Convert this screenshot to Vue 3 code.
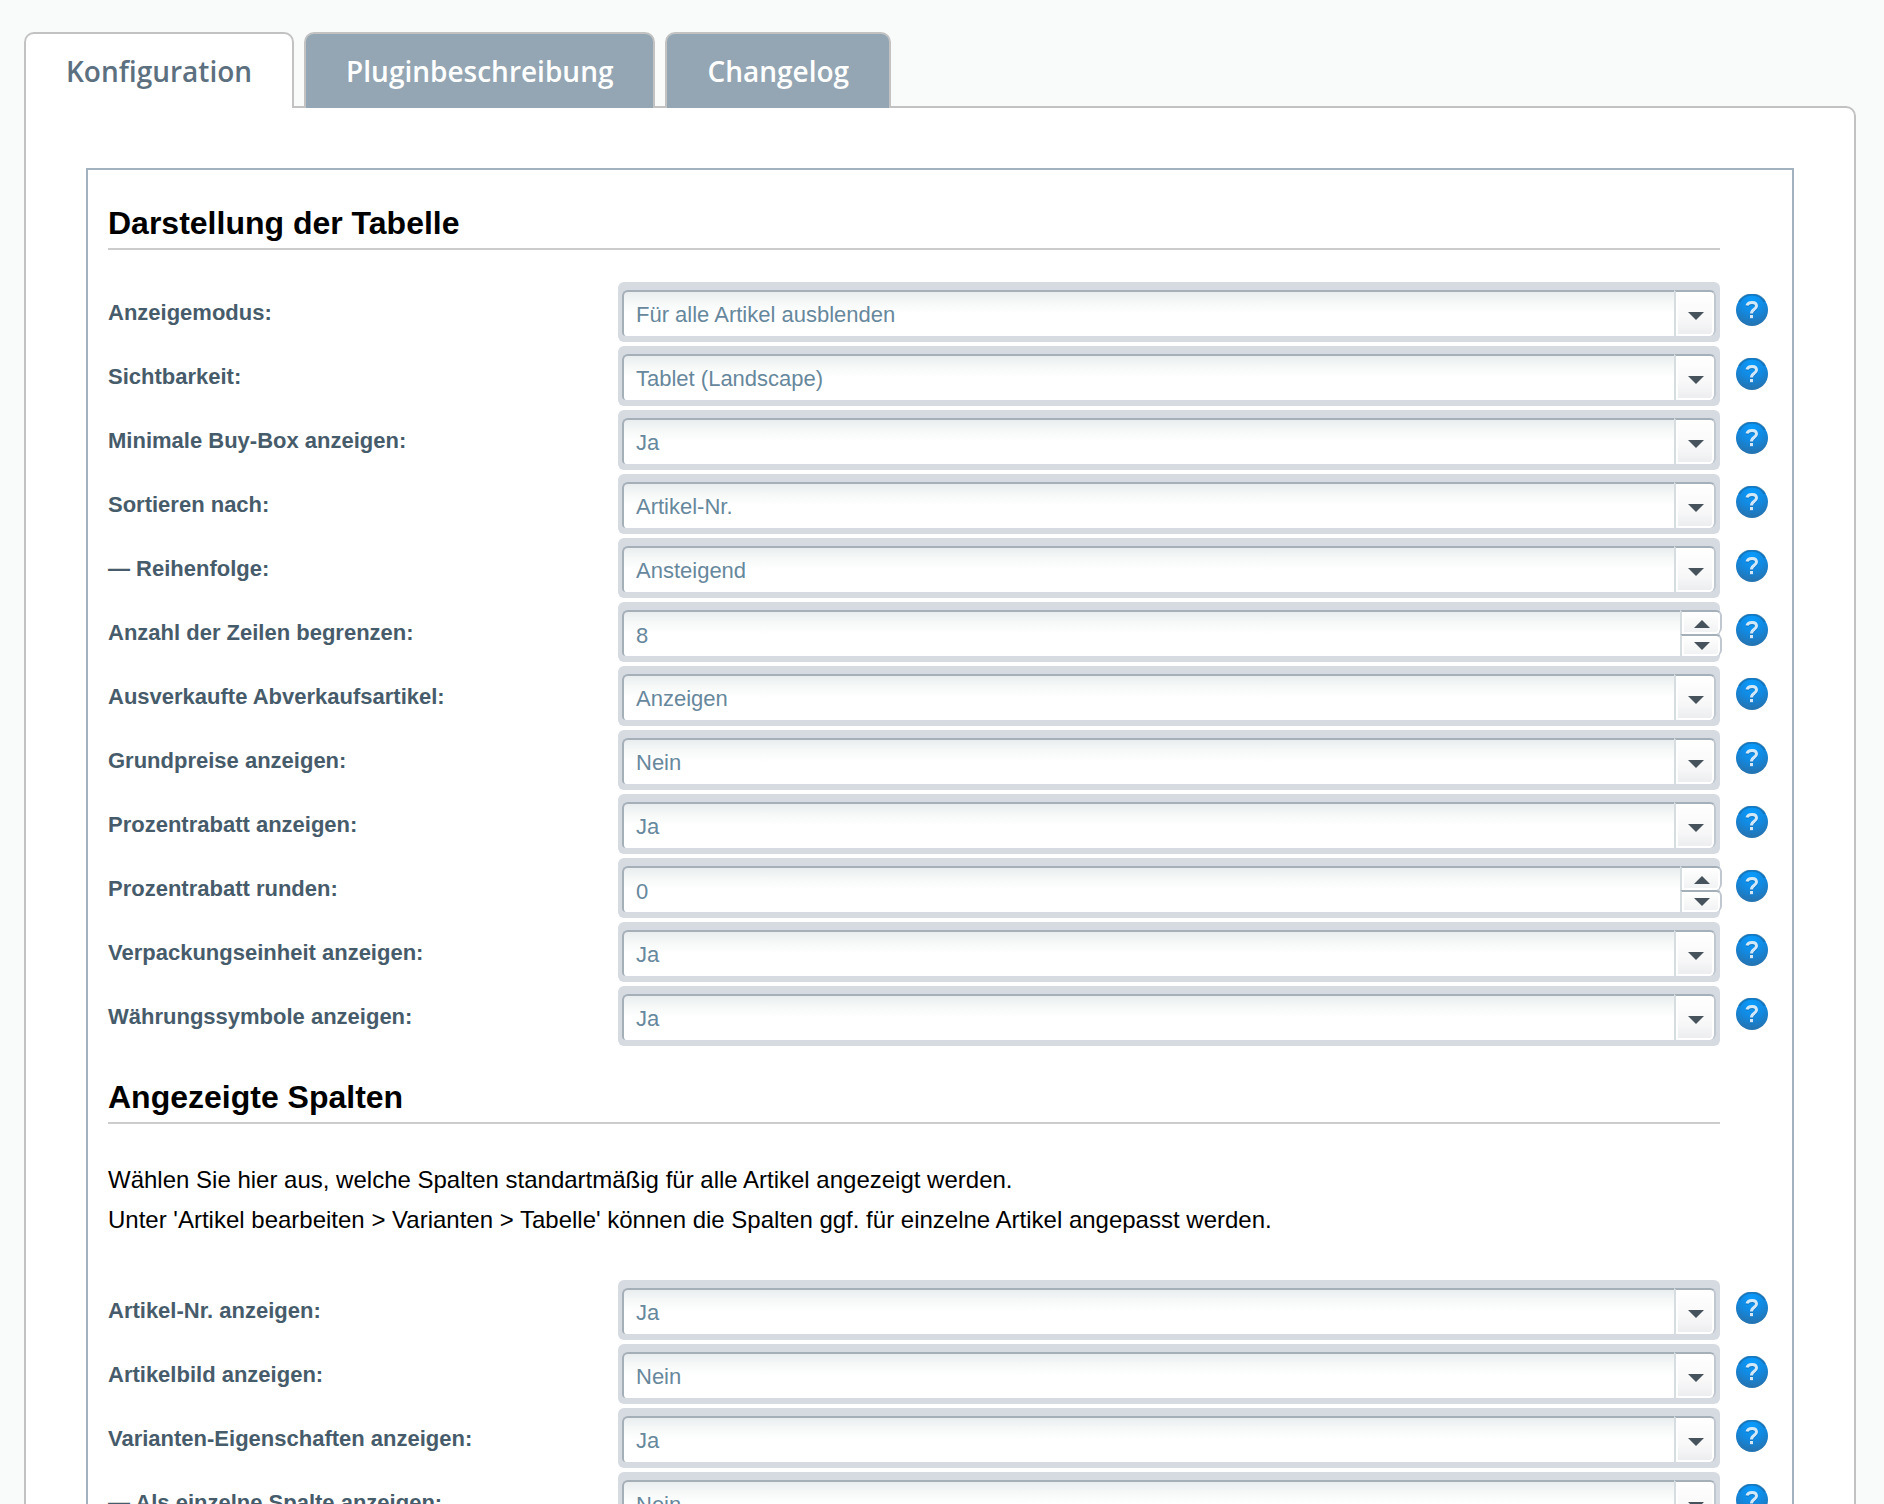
<script setup>
import { ref, reactive } from 'vue'

const tabs = ['Konfiguration', 'Pluginbeschreibung', 'Changelog']
const activeTab = ref(0)

const yesNo = ['Ja', 'Nein']

const sections = reactive([
  {
    id: 'table',
    title: 'Darstellung der Tabelle',
    intro: [],
    fields: [
      { label: 'Anzeigemodus:', value: 'Für alle Artikel ausblenden', options: ['Für alle Artikel ausblenden', 'Für alle Artikel anzeigen'] },
      { label: 'Sichtbarkeit:', value: 'Tablet (Landscape)', options: ['Tablet (Landscape)', 'Desktop'] },
      { label: 'Minimale Buy-Box anzeigen:', value: 'Ja', options: yesNo },
      { label: 'Sortieren nach:', value: 'Artikel-Nr.', options: ['Artikel-Nr.', 'Preis'] },
      { label: '— Reihenfolge:', value: 'Ansteigend', options: ['Ansteigend', 'Absteigend'] },
      { label: 'Anzahl der Zeilen begrenzen:', value: 8, number: true },
      { label: 'Ausverkaufte Abverkaufsartikel:', value: 'Anzeigen', options: ['Anzeigen', 'Ausblenden'] },
      { label: 'Grundpreise anzeigen:', value: 'Nein', options: yesNo },
      { label: 'Prozentrabatt anzeigen:', value: 'Ja', options: yesNo },
      { label: 'Prozentrabatt runden:', value: 0, number: true },
      { label: 'Verpackungseinheit anzeigen:', value: 'Ja', options: yesNo },
      { label: 'Währungssymbole anzeigen:', value: 'Ja', options: yesNo },
    ],
  },
  {
    id: 'columns',
    title: 'Angezeigte Spalten',
    intro: [
      'Wählen Sie hier aus, welche Spalten standartmäßig für alle Artikel angezeigt werden.',
      "Unter 'Artikel bearbeiten > Varianten > Tabelle' können die Spalten ggf. für einzelne Artikel angepasst werden.",
    ],
    fields: [
      { label: 'Artikel-Nr. anzeigen:', value: 'Ja', options: yesNo },
      { label: 'Artikelbild anzeigen:', value: 'Nein', options: yesNo },
      { label: 'Varianten-Eigenschaften anzeigen:', value: 'Ja', options: yesNo },
      { label: '— Als einzelne Spalte anzeigen:', value: 'Nein', options: yesNo },
    ],
  },
])

function step(field, delta) {
  field.value = Math.max(0, Number(field.value) + delta)
}
</script>

<template>
  <div class="page">
    <nav class="tabs">
      <button
        v-for="(tab, i) in tabs"
        :key="tab"
        type="button"
        class="tab"
        :class="{ active: i === activeTab }"
        @click="activeTab = i"
      >{{ tab }}</button>
    </nav>

    <main class="panel">
      <form class="box" @submit.prevent>
        <section v-for="s in sections" :key="s.id" class="section">
          <h2>{{ s.title }}</h2>
          <p v-if="s.intro.length">
            <template v-for="line in s.intro" :key="line">{{ line }}<br></template>
          </p>
          <div class="rows">
            <div v-for="(f, i) in s.fields" :key="f.label" class="row">
              <label :for="`${s.id}-${i}`">{{ f.label }}</label>

              <div v-if="f.number" class="field spinner">
                <input :id="`${s.id}-${i}`" v-model="f.value" type="text" inputmode="numeric">
                <span class="steps">
                  <button type="button" aria-label="Erhöhen" @click="step(f, 1)">
                    <svg viewBox="0 0 16 8"><path d="M8 0 16 8H0z" /></svg>
                  </button>
                  <button type="button" aria-label="Verringern" @click="step(f, -1)">
                    <svg viewBox="0 0 16 8"><path d="M0 0h16L8 8z" /></svg>
                  </button>
                </span>
              </div>

              <div v-else class="field combo">
                <select :id="`${s.id}-${i}`" v-model="f.value">
                  <option v-for="o in f.options" :key="o">{{ o }}</option>
                </select>
                <span class="trigger">
                  <svg viewBox="0 0 16 8"><path d="M0 0h16L8 8z" /></svg>
                </span>
              </div>

              <button type="button" class="help" aria-label="Hilfe">
                <svg viewBox="0 0 32 32">
                  <defs>
                    <radialGradient :id="`glow-${s.id}-${i}`" cx="0.5" cy="0.2" r="0.8">
                      <stop offset="0" stop-color="#089cff" />
                      <stop offset="0.5" stop-color="#1289e0" />
                      <stop offset="1" stop-color="#2672ae" />
                    </radialGradient>
                  </defs>
                  <circle cx="16" cy="16" r="16" :fill="`url(#glow-${s.id}-${i})`" />
                  <path class="rim" d="M3 8A15 15 0 0 1 29 8" />
                  <path class="mark shade" d="M11 12.500C12 8.500 20.500 8 20.500 13 20.500 16.500 15.500 16 15.500 20.500M15.500 22v3.200" />
                  <path class="mark" d="M11 11.500C12 7.500 20.500 7 20.500 12 20.500 15.500 15.500 15 15.500 19.500M15.500 21v3.200" />
                </svg>
              </button>
            </div>
          </div>
        </section>
      </form>
    </main>
  </div>
</template>

<style>
body {
  margin: 0;
  background: #f9fbfa;
}
</style>

<style scoped>
.page {
  box-sizing: border-box;
  height: 100vh;
  padding: 32px 28px 0 24px;
  overflow-y: auto;
  scrollbar-width: none;
  background: #f9fbfa;
  font-family: "Liberation Sans", Arial, sans-serif;
}

.tabs {
  position: relative;
  display: flex;
  gap: 10px;
  margin-bottom: -2px;
}

.tab {
  box-sizing: border-box;
  height: 76px;
  padding: 0 40px;
  border: 2px solid #c2c2c2;
  border-bottom: 0;
  border-radius: 10px 10px 0 0;
  background: #94a6b3;
  color: #fff;
  font: 600 28px/74px "Open Sans", sans-serif;
  cursor: pointer;
}

.tab.active {
  background: #fff;
  color: #5c7080;
}

.panel {
  padding: 60px;
  border: 2px solid #c2c2c2;
  border-radius: 0 10px 0 0;
  background: #fff;
}

.box {
  padding: 32px 72px 32px 20px;
  border: 2px solid #a3b2bf;
}

h2 {
  margin: 0 0 32px;
  padding-bottom: 4px;
  border-bottom: 2px solid #ccc;
  color: #000;
  font-size: 32px;
  line-height: 42px;
}

.section + .section {
  margin-top: 30px;
}

p {
  margin: 0 0 40px;
  padding-top: 4px;
  color: #000;
  font-size: 24px;
  line-height: 40px;
}

.rows {
  display: flex;
  flex-direction: column;
  gap: 4px;
}

.row {
  display: flex;
  align-items: flex-start;
  height: 60px;
  margin-right: -48px;
}

label {
  flex: 0 0 510px;
  color: #475c6b;
  font-size: 22px;
  font-weight: bold;
  line-height: 62px;
}

.field {
  box-sizing: border-box;
  display: flex;
  flex: 1;
  min-width: 0;
  height: 60px;
  padding: 8px 4px 6px;
  border-radius: 6px;
  background: #d6dbe2;
}

select,
input {
  box-sizing: border-box;
  flex: 1;
  min-width: 0;
  height: 46px;
  margin: 0;
  padding: 3px 12px 0;
  border: 0 solid #a4afb7;
  border-width: 2px 0 0 2px;
  border-radius: 6px 0 0 4px;
  outline: 0;
  appearance: none;
  background: linear-gradient(#e9eded, #f6f8f8 10px, #fff 22px);
  color: #67889c;
  font: 22px "Liberation Sans", Arial, sans-serif;
}

select {
  padding-top: 0;
}

.trigger {
  box-sizing: border-box;
  display: flex;
  align-items: center;
  justify-content: center;
  width: 42px;
  height: 46px;
  padding: 4px 0 0 2px;
  border: 2px solid #d6dde1;
  border-top-color: #a4afb7;
  border-right-color: #c1c7d0;
  border-bottom: 0;
  border-radius: 0 6px 6px 0;
  background: linear-gradient(#fff, #f8f8f9 60%, #ebecee);
  box-shadow: inset 0 0 0 2px #fff;
  pointer-events: none;
}

svg {
  display: block;
}

.trigger svg,
.steps svg {
  width: 16px;
  height: 8px;
  fill: #46535c;
}

.steps {
  display: flex;
  flex-direction: column;
  width: 42px;
  height: 46px;
  margin-right: -6px;
}

.steps button {
  box-sizing: border-box;
  display: flex;
  align-items: center;
  justify-content: center;
  height: 24px;
  padding: 2px 0 0 2px;
  border: 2px solid #d6dde1;
  border-top-color: #a4afb7;
  border-right-color: #c1c7d0;
  border-bottom: 0;
  border-radius: 0 6px 6px 0;
  background: linear-gradient(#fff, #f0f1f2);
  box-shadow: inset 0 0 0 2px #fff;
}

.steps button:last-child {
  height: 22px;
  padding-top: 0;
}

.help {
  flex: none;
  margin: 12px 0 0 16px;
  padding: 0;
  border: 0;
  background: none;
  cursor: pointer;
}

.help svg {
  width: 32px;
  height: 32px;
}

.rim {
  fill: none;
  stroke: #1669a8;
  stroke-width: 2;
  opacity: 0.7;
}

.mark {
  fill: none;
  stroke: #d3e9f9;
  stroke-width: 3;
}

.shade {
  stroke: #125f9e;
  opacity: 0.6;
}
</style>
